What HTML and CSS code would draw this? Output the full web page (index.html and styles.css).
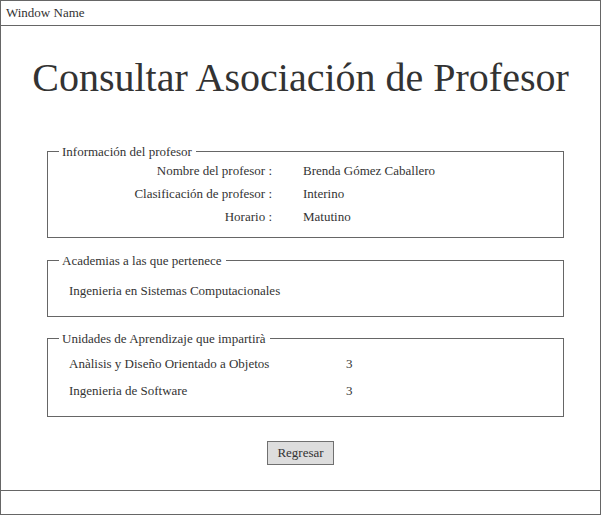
FILE: index.html
```html
<!DOCTYPE html>
<html lang="es">
<head>
<meta charset="utf-8">
<title>Consultar Asociación de Profesor</title>
<link rel="stylesheet" href="styles.css">
</head>
<body>
<div class="window">
  <div class="titlebar">Window Name</div>
  <main class="content">
    <h1 class="title">Consultar Asociación de Profesor</h1>

    <fieldset class="group group-info">
      <legend class="legend">Información del profesor</legend>
      <div class="info-grid">
        <div class="info-label">Nombre del profesor :</div>
        <div class="info-value">Brenda Gómez Caballero</div>
        <div class="info-label">Clasificación de profesor :</div>
        <div class="info-value">Interino</div>
        <div class="info-label">Horario :</div>
        <div class="info-value">Matutino</div>
      </div>
    </fieldset>

    <fieldset class="group group-academias">
      <legend class="legend">Academias a las que pertenece</legend>
      <div class="academia">Ingenieria en Sistemas Computacionales</div>
    </fieldset>

    <fieldset class="group group-unidades">
      <legend class="legend">Unidades de Aprendizaje que impartirà</legend>
      <div class="unidades-grid">
        <div class="unidad-name">Anàlisis y Diseño Orientado a Objetos</div>
        <div class="unidad-num">3</div>
        <div class="unidad-name">Ingenieria de Software</div>
        <div class="unidad-num">3</div>
      </div>
    </fieldset>

    <div class="actions">
      <button class="btn" type="button">Regresar</button>
    </div>
  </main>
  <div class="footer"></div>
</div>
</body>
</html>
```

FILE: styles.css
```css
html, body {
  margin: 0;
  padding: 0;
  background: #ffffff;
}

body {
  font-family: "Liberation Serif", "Times New Roman", serif;
  font-size: 13px;
  color: #333333;
}

.window {
  width: 601px;
  height: 515px;
  box-sizing: border-box;
  border: 1px solid #666666;
  display: flex;
  flex-direction: column;
}

.titlebar {
  height: 24px;
  line-height: 24px;
  padding-left: 5px;
  border-bottom: 1px solid #666666;
  flex: none;
}

.content {
  flex: 1;
  display: flex;
  flex-direction: column;
}

.title {
  margin: 28px 0 0 0;
  font-size: 40px;
  font-weight: normal;
  line-height: 48px;
  text-align: center;
  color: #333333;
}

.group {
  margin: 42px 0 0 46px;
  width: 517px;
  box-sizing: border-box;
  border: 1px solid #666666;
  padding: 0 12px 0 11px;
  min-width: 0;
}

.legend {
  padding: 0 4px 0 3px;
  line-height: 15px;
}

.group-info {
  padding-top: 0;
  padding-bottom: 9px;
}

.info-grid {
  display: grid;
  grid-template-columns: 213px 1fr;
  column-gap: 31px;
  grid-auto-rows: 23px;
  align-items: center;
}

.info-label {
  text-align: right;
}

.group-academias {
  margin-top: 15px;
  padding-top: 12px;
  padding-bottom: 14px;
}

.academia {
  padding-left: 10px;
  line-height: 22px;
}

.group-unidades {
  margin-top: 14px;
  padding-top: 4px;
  padding-bottom: 12px;
}

.unidades-grid {
  display: grid;
  grid-template-columns: 277px 1fr;
  grid-auto-rows: 27px;
  align-items: center;
  padding-left: 10px;
}

.actions {
  display: flex;
  justify-content: center;
  margin-top: 24px;
}

.btn {
  width: 67px;
  height: 24px;
  padding: 0;
  font-family: "Liberation Serif", "Times New Roman", serif;
  font-size: 13px;
  color: #333333;
  background: #dddddd;
  border: 1px solid #707070;
  border-radius: 0;
}

.footer {
  height: 23px;
  border-top: 1px solid #666666;
  flex: none;
}
```
